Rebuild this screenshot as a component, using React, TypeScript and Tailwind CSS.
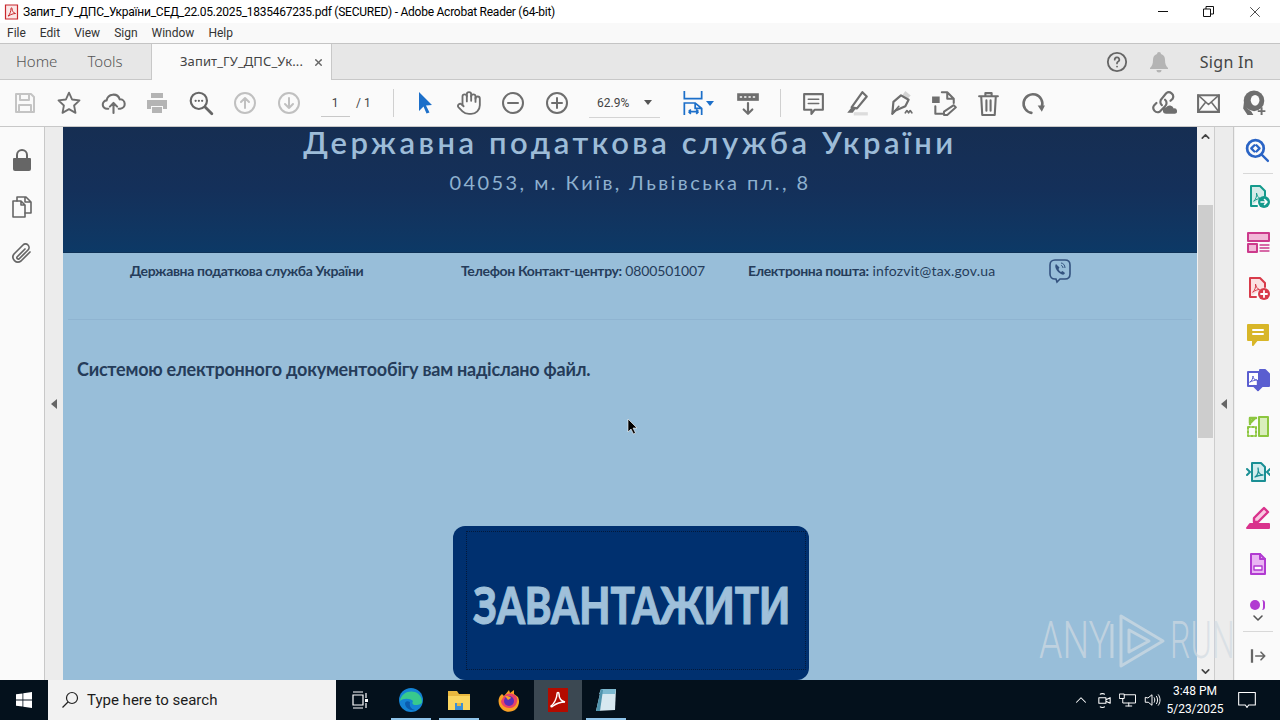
import { ChevronDown, ChevronUp, Hand, X } from "lucide-react";
import type { ReactNode } from "react";

const ui = "font-['Roboto',sans-serif]";
const adobe = "font-['Noto_Sans',sans-serif]";
const doc = "font-['Lato','Noto_Sans',sans-serif]";

function Ico({ size = 24, className = "", children }: { size?: number; className?: string; children: ReactNode }) {
  return (
    <svg
      width={size}
      height={size}
      viewBox="0 0 24 24"
      fill="none"
      stroke="currentColor"
      strokeWidth="2"
      strokeLinecap="round"
      strokeLinejoin="round"
      className={className}
    >
      {children}
    </svg>
  );
}

function Slot({ children, className = "w-11" }: { children: ReactNode; className?: string }) {
  return <div className={`flex h-full shrink-0 items-center justify-center ${className}`}>{children}</div>;
}

function Toolbar() {
  return (
    <div className="flex h-[47px] shrink-0 items-center border-b border-[#c8c8c8] bg-[#fafafa] pl-[3px] text-[#6e6e6e]">
      <Slot>
        <Ico className="text-[#c4c4c4]">
          <path d="M3 3h15l3 3v15H3z" />
          <path d="M7 3v6h9V3M6 21v-7h12v7" />
        </Ico>
      </Slot>
      <Slot>
        <Ico size={26}>
          <path strokeWidth="1.7" d="M12 2.500l2.900 6.300 6.800.8-5 4.700 1.300 6.800-6-3.400-6 3.400 1.300-6.800-5-4.700 6.800-.8z" />
        </Ico>
      </Slot>
      <Slot>
        <Ico size={25}>
          <path d="M7 17H6a4 4 0 0 1-.6-8A6.500 6.500 0 0 1 18 8a4.500 4.500 0 0 1 .5 9H17" />
          <path d="M12 21v-9M8.500 15l3.500-3.500 3.500 3.500" />
        </Ico>
      </Slot>
      <Slot>
        <svg width="24" height="24" viewBox="0 0 24 24" className="text-[#b4b4b4]" fill="currentColor">
          <path d="M6 2h12v5H6zM2 9h20v9h-4v-3H6v3H2z" />
          <path d="M7 16h10v6H7z" />
        </svg>
      </Slot>
      <Slot>
        <Ico size={26} className="text-[#666]">
          <circle cx="10" cy="10" r="7.500" />
          <path d="M16 16l6 6" strokeWidth="2.600" />
          <path d="M7 10h.1M10 10h.1M13 10h.1" />
        </Ico>
      </Slot>
      <Slot>
        <Ico className="text-[#c0c0c0]">
          <circle cx="12" cy="12" r="10" />
          <path d="M12 17V7M8 11l4-4 4 4" />
        </Ico>
      </Slot>
      <Slot>
        <Ico className="text-[#c0c0c0]">
          <circle cx="12" cy="12" r="10" />
          <path d="M12 7v10M8 13l4 4 4-4" />
        </Ico>
      </Slot>
      <Slot className="w-[48px]">
        <span className={`${ui} flex h-[27px] w-[29px] items-center justify-center border-b border-[#c8c8c8] text-xs text-[#444]`}>1</span>
      </Slot>
      <span className={`${ui} ml-[-3px] w-[18px] text-xs text-[#444]`}>/ 1</span>
      <div className="ml-[19px] h-[28px] w-px bg-[#d0d0d0]" />
      <Slot className="ml-[9px] w-[44px]">
        <svg width="24" height="24" viewBox="0 0 24 24" fill="#1c6fc9">
          <path d="M6 1l13 13-6 .5 3.500 7-3 1-3-7L6 20z" />
        </svg>
      </Slot>
      <Slot>
        <Hand size={26} strokeWidth={1.7} />
      </Slot>
      <Slot>
        <Ico>
          <circle cx="12" cy="12" r="10" />
          <path d="M7 12h10" />
        </Ico>
      </Slot>
      <Slot>
        <Ico>
          <circle cx="12" cy="12" r="10" />
          <path d="M7 12h10M12 7v10" />
        </Ico>
      </Slot>
      <div className={`${ui} ml-[10px] flex h-[29px] w-[71px] items-center justify-between border-b border-[#d4d4d4] pl-[8px] pr-[8px] text-xs text-[#444]`}>
        <span>62.9%</span>
        <span className="h-0 w-0 border-x-[4px] border-t-[5px] border-x-transparent border-t-[#555]" />
      </div>
      <div className="ml-[20px] flex w-[34px] items-center">
        <Ico size={26} className="text-[#1c6fc9]">
          <path d="M4 1v7h16V1M4 23V12h10l6 5v6M14 12v5h6M8 20h9M8 20l2-2M8 20l2 2M17 20l-2-2M17 20l-2 2" strokeWidth="1.600" strokeLinecap="butt" strokeLinejoin="miter" />
        </Ico>
        <span className="h-0 w-0 border-x-[4px] border-t-[5px] border-x-transparent border-t-[#1c6fc9]" />
      </div>
      <Slot className="ml-[12px] w-[44px]">
        <Ico size={26}>
          <path d="M2 3h20v7H2z" fill="#6e6e6e" stroke="none" />
          <path d="M5 6.500h1M9 6.500h1M13 6.500h1M17 6.500h1" stroke="#fff" strokeWidth="1.500" />
          <path d="M12 12v10M8 18l4 4 4-4" />
        </Ico>
      </Slot>
      <div className="ml-[10px] h-[28px] w-px bg-[#d0d0d0]" />
      <Slot className="ml-[10px] w-[44px]">
        <Ico size={25}>
          <path d="M3 3h18v15H13l-3 4v-4H3z" />
          <path d="M7 8h10M7 12h10" strokeWidth="1.500" />
        </Ico>
      </Slot>
      <Slot>
        <Ico size={26}>
          <path d="M17 2l4 4-9 11-5-1z" fill="#fafafa" />
          <path d="M7 16l-4 5h5l3-4" fill="#6e6e6e" stroke="none" />
          <path d="M9 22h13" stroke="#dcdcdc" strokeWidth="3" strokeLinecap="butt" />
        </Ico>
      </Slot>
      <Slot className="w-[43px]">
        <Ico size={26}>
          <path d="M16 1l5 4-3 3-5-3z" fill="#d4d4d4" stroke="none" />
          <path d="M12 5l7 4-3 6-9 4-3 3 1-11z" strokeWidth="2" />
          <path d="M4 22l6-7" strokeWidth="1.500" />
          <path d="M16 21l1.500-2 1.500 2 1.500-2 1.500 2" strokeWidth="1.600" />
        </Ico>
      </Slot>
      <Slot>
        <Ico size={26}>
          <path d="M10 2h5l6 6v4M15 2v6h6" strokeWidth="1.900" />
          <path d="M1 6h7v6H1z" fill="#6e6e6e" stroke="none" />
          <path d="M4 15v7h7" strokeWidth="1.900" />
          <path d="M21 14l2 2-8 7h-3v-3z" strokeWidth="1.800" />
        </Ico>
      </Slot>
      <Slot className="w-[45px]">
        <Ico size={25}>
          <path d="M3 5h18M9 5V2h6v3M5 5l1 18h12l1-18M10 9v10M14 9v10" />
        </Ico>
      </Slot>
      <Slot>
        <Ico size={25}>
          <path strokeWidth="2.500" d="M10 21a9 9 0 1 1 10-6" />
          <path d="M16 14h7l-3 6z" fill="#6e6e6e" stroke="none" />
        </Ico>
      </Slot>
      <div className="ml-auto flex h-full pr-[4px]">
        <Slot className="w-[45px]">
          <Ico size={26}>
            <path d="M10 14a4 4 0 0 1 0-6l4-5a4 4 0 0 1 6 5l-2 2M13 9a4 4 0 0 1 0 6l-5 5a4 4 0 0 1-5-6l2-2" />
            <path d="M14 22a3 3 0 0 1 0-6 4 4 0 0 1 7 1 2.500 2.500 0 0 1 1 5z" fill="#6e6e6e" stroke="none" />
          </Ico>
        </Slot>
        <Slot className="w-[45px]">
          <Ico size={25}>
            <path d="M2 4h20v16H2z" strokeLinejoin="miter" />
            <path d="M2 4l10 9 10-9M2 20l7-9M22 20l-7-9" strokeWidth="1.500" />
          </Ico>
        </Slot>
        <Slot className="w-[45px]">
          <svg width="26" height="26" viewBox="0 0 24 24">
            <circle cx="12" cy="10" r="9.500" fill="#6e6e6e" />
            <path d="M3 9c1 6 3 9 7 11l2 3H6l-4-6z" fill="#6e6e6e" />
            <ellipse cx="13" cy="9.500" rx="4" ry="5" fill="#fafafa" />
            <path d="M9 19c2 2 7 2 8-1l6 1v5H12z" fill="#fafafa" />
            <path d="M19 16v7M15.500 19.500h7" stroke="#6e6e6e" strokeWidth="1.800" />
          </svg>
        </Slot>
      </div>
    </div>
  );
}

const rightTools: ReactNode[] = [
  <g className="text-[#149a8c]">
    <path d="M5 22V2h9l5 5v5M11 22H5" stroke="currentColor" fill="#d4ebe8" />
    <path d="M8 17c2-2 3-5 2.500-8 .5 3 2 5 4 5.500-2 0-4.500 1-6.500 2.500z" stroke="currentColor" strokeWidth="1" />
    <circle cx="18" cy="18" r="6" fill="currentColor" stroke="none" />
    <path d="M15 18h6M18.500 15.500L21 18l-2.500 2.500" stroke="#fff" strokeWidth="1.600" />
  </g>,
  <g className="text-[#cc3a8c]">
    <path d="M2 3h21v8H2z" fill="#f2b8d8" stroke="currentColor" />
    <path d="M2 14h9v8H2z" fill="#f2b8d8" stroke="currentColor" />
    <path d="M14 15h9M14 18h9M14 21h9" stroke="currentColor" strokeWidth="1.300" />
  </g>,
  <g className="text-[#d83b4a]">
    <path d="M4 21V2h10l5 5v4M4 21h6" stroke="currentColor" fill="#fbe0e2" />
    <path d="M7 16c2-2 3-5 2.500-8 .5 3 2 5 4 5.500-2 0-4.500 1-6.500 2.500z" stroke="currentColor" strokeWidth="1" />
    <circle cx="18" cy="18" r="6" fill="currentColor" stroke="none" />
    <path d="M15 18h6M18 15v6" stroke="#fff" strokeWidth="1.800" />
  </g>,
  <g>
    <path d="M2 3h20v15H11l-4 5v-5H2z" fill="#d8b628" stroke="#d8b628" />
    <path d="M7 8h10M7 12h10" stroke="#fff" />
  </g>,
  <g>
    <path d="M2 4h11v14H2z" fill="#fff" stroke="#5a5ed0" />
    <path d="M4 14c2-1 3-4 3-6 0 2 1 4 4 4-2 0-5 1-7 2z" stroke="#5a5ed0" strokeWidth="1" />
    <path d="M14 2h5l4 4v12H14z" fill="#5a5ed0" stroke="#5a5ed0" />
    <path d="M12 13v9M8 18l4 4 4-4" stroke="#5a5ed0" strokeWidth="2.400" />
  </g>,
  <g stroke="#8cc63f">
    <path d="M13 3h9v19h-9z" fill="#d9eebc" />
    <path d="M2 13h8v9H2z" strokeDasharray="2 2" />
    <path d="M10 4H4v6M9 4L4 9" strokeWidth="2.500" />
  </g>,
  <g stroke="#1a8f94">
    <path d="M6 3h9l4 4v14H6z" fill="#d2eced" />
    <path d="M1 9l3 3-3 3M24 9l-3 3 3 3" />
    <path d="M9 17c3-2 4-6 3-9 0 4 2 7 5 7-3 0-6 1-8 2z" strokeWidth="1.300" />
  </g>,
  <g>
    <path d="M18 2l4 4-10 10H8v-4z" fill="#f9c9e2" stroke="#d9328c" strokeWidth="2.400" />
    <path d="M1 22l3-4h19v4z" fill="#d9328c" stroke="#d9328c" />
  </g>,
  <g>
    <path d="M5 2h9l5 5v15H5z" fill="#eab5f4" stroke="#b13bd1" />
    <path d="M14 2v5h5" stroke="#b13bd1" />
    <path d="M8 14h8v4H8z" fill="#fff" stroke="#b13bd1" strokeWidth="1.400" />
  </g>,
];

function RightPanel() {
  return (
    <aside className="flex w-[46px] shrink-0 flex-col items-center overflow-hidden border-l border-[#f0f0f0] bg-[#fafafa]">
      <div className="flex h-[46px] shrink-0 items-center justify-center">
        <Ico size={25} className="text-[#2a64c5]">
          <circle cx="10" cy="10" r="8" strokeWidth="2.600" />
          <path d="M16 16l6 6M9 7l-3 3 3 3M11 7l3 3-3 3" strokeWidth="2.200" />
        </Ico>
      </div>
      <div className="h-px w-[30px] shrink-0 bg-[#d8d8d8]" />
      <div className="flex flex-col gap-[22px] pt-[10px]">
        {rightTools.map((node, i) => (
          <Ico key={i} size={24}>
            {node}
          </Ico>
        ))}
      </div>
      <div className="mt-[24px] flex h-[10px] shrink-0 items-start gap-[2px] overflow-hidden">
        <span className="h-[10px] w-[10px] rounded-full bg-[#b13bd1]" />
        <span className="h-[10px] w-[3px] rounded-r-full border-r-2 border-[#b13bd1]" />
      </div>
      <ChevronDown size={16} strokeWidth={2.4} className="shrink-0 text-[#555]" />
      <div className="mt-[5px] h-px w-[30px] shrink-0 bg-[#d8d8d8]" />
      <div className="flex flex-1 items-center">
        <Ico size={18} className="text-[#666]">
          <path d="M4 3v18" strokeWidth="3" strokeLinecap="butt" />
          <path d="M9 12h12M16 7l5 5-5 5" strokeWidth="2.200" />
        </Ico>
      </div>
    </aside>
  );
}

function Page() {
  return (
    <div className={`${doc} w-[1134px] shrink-0 bg-[#98bed9]`}>
      <div className="flex h-[126px] flex-col items-center border-b border-[#0e3257] bg-gradient-to-b from-[#162e52] via-[#14305a] to-[#0c3966]">
        <div className="mt-[-1px] text-[31px] font-semibold leading-[32px] tracking-[3.52px] text-[#9dbcd8]">Державна податкова служба України</div>
        <div className="mt-[10px] text-[20px] leading-[28px] tracking-[2.45px] text-[#8eb1cf]">04053, м. Київ, Львівська пл., 8</div>
      </div>
      <div className="h-[66px] pl-[67px] pt-[5px] text-[#253c5a]">
        <div className="grid grid-cols-[331px_287px_301px_24px] items-center text-sm leading-5">
          <span className="font-bold tracking-[-0.35px]">Державна податкова служба України</span>
          <span className="tracking-[-0.15px]">
            <b className="tracking-[-0.35px]">Телефон Контакт-центру:</b> 0800501007
          </span>
          <span className="tracking-[0.2px]">
            <b className="tracking-[-0.35px]">Електронна пошта:</b> infozvit@tax.gov.ua
          </span>
          <svg width="22" height="26" viewBox="0 0 22 26" fill="none" stroke="#33527f" strokeWidth="1.600">
            <path d="M7 21H6c-3 0-5-2-5-5V7c0-3 2-5 5-5h10c3 0 5 2 5 5v9c0 3-2 5-5 5h-5l-3 3z" />
            <path d="M7 6c-1 1-1 3 0 5s3 4 5 5 3 1 4-1l-2.500-2-1.500 1c-1-.5-2-1.500-2.500-3l1-1.500z" fill="#33527f" stroke="none" />
            <path d="M12 5c2 0 4 2 4 5M12 7.500c1 0 2 1 2 2.500" strokeWidth="1" />
          </svg>
        </div>
      </div>
      <div className="mx-[5px] h-px bg-[#8fb4d1]" />
      <h2 className="pl-[14px] pt-[37px] text-lg font-bold leading-[24px] tracking-[-0.23px] text-[#253c5a]">
        Системою електронного документообігу вам надіслано файл.
      </h2>
      <div className="ml-[390px] mt-[145px] h-[154px] w-[356px] rounded-[12px] bg-[#00306f] pl-[13px] pr-[3px] pt-[5px]">
        <div className="flex h-[139px] items-center justify-center border border-dotted border-[#04193a] pr-[8px] pt-[7px] text-[51px] font-black leading-none text-[#9fc0da]">
          <span className="mx-[-50px] inline-block scale-x-[0.79] whitespace-nowrap [-webkit-text-stroke:1px_#9fc0da]">ЗАВАНТАЖИТИ</span>
        </div>
      </div>
    </div>
  );
}

function TaskIcon({ children, lined, className = "" }: { children: ReactNode; lined?: boolean; className?: string }) {
  return (
    <div className={`relative flex items-center justify-center ${className}`}>
      {children}
      {lined && <span className="absolute inset-x-[4px] bottom-0 h-[2px] bg-[#8fc4ea]" />}
    </div>
  );
}

function Taskbar() {
  return (
    <div className="flex h-10 shrink-0 items-stretch bg-[#04111c] text-white">
      <div className="flex w-12 items-center justify-center">
        <svg width="16" height="16" viewBox="0 0 16 16" fill="#fff">
          <path d="M0 2.300l6.500-.9v6.200H0zM7.300 1.300L16 0v7.600H7.300zM0 8.400h6.500v6.200L0 13.700zM7.300 8.400H16V16l-8.700-1.300z" />
        </svg>
      </div>
      <div className={`${ui} flex w-[288px] items-center bg-[#f2f2f2] pl-[13px] text-[#1c1c1c]`}>
        <svg width="18" height="18" viewBox="0 0 18 18" fill="none" stroke="#222" strokeWidth="1.200">
          <circle cx="11" cy="7" r="5.500" />
          <path d="M7 11l-5.500 5.500" />
        </svg>
        <span className="ml-[8px] text-[15px]">Type here to search</span>
      </div>
      <div className="flex w-12 items-center justify-center">
        <svg width="16" height="18" viewBox="0 0 16 18" fill="none" stroke="#fff" strokeWidth="1.200">
          <path d="M1 4h10v10H1zM1 1h10M1 17h10M14 2v5M14 12v5" />
          <path d="M13 8h3v3h-3z" fill="#fff" stroke="none" />
        </svg>
      </div>
      <TaskIcon lined className="ml-[3px] w-[48px]">
        <svg width="26" height="26" viewBox="0 0 26 26">
          <circle cx="13" cy="13" r="12" fill="#1483d4" />
          <path d="M2 14C3 6 11 3 17 5c5 2 7 6 7 10 0 2-3 3-6 3-4 0-4-2-3-4-3-3-10-3-13 0z" fill="#38c98d" />
          <path d="M7 16c0 5 5 8 10 7-4-1-6-4-5-8-2-1-4-1-5 1z" fill="#0b5cae" />
        </svg>
      </TaskIcon>
      <TaskIcon lined className="w-[48px]">
        <svg width="24" height="24" viewBox="0 0 24 24">
          <path d="M1 3h9l2 3h11v3H1z" fill="#e9b83f" />
          <path d="M1 8h22v14H1z" fill="#fbd661" />
          <path d="M8 15h8v7H8z" fill="#3e8fd6" />
          <path d="M10 15h4v3h-4z" fill="#e9b83f" />
        </svg>
      </TaskIcon>
      <TaskIcon className="w-[51px]">
        <svg width="26" height="26" viewBox="0 0 26 26">
          <path d="M4 9l2-2 2 2 5-6 1 3 4-3v4l4 3c2 4 1 9-2 12s-9 4-13 1-6-9-3-14z" fill="#f9a125" />
          <path d="M8 9c4-4 11-3 13 2 1 5-2 10-8 10-4 0-8-3-8-7z" fill="#e8416a" />
          <circle cx="13" cy="14" r="5" fill="#5a2fb8" />
          <path d="M9 9c2 0 5 0 6 2l-3 2z" fill="#f9a125" />
        </svg>
      </TaskIcon>
      <TaskIcon className="w-[48px] bg-[#3b4852]">
        <svg width="24" height="24" viewBox="0 0 24 24">
          <path d="M2 0h20v24H2z" fill="#b30b00" />
          <path d="M5 18c3-2 6-8 6-12 0-2 2-2 2 0 0 4 2 7 6 8-3 0-8 1-12 4-1 1-2 1-2 0z" fill="none" stroke="#fff" strokeWidth="1.500" />
        </svg>
      </TaskIcon>
      <TaskIcon lined className="w-[48px]">
        <svg width="26" height="26" viewBox="0 0 26 26">
          <path d="M8 2h15l-1 21-19 1z" fill="#d7e8f0" />
          <path d="M8 2h15l-1 5H6z" fill="#7db9d0" />
          <path d="M3 24L8 2l2 1-3 21z" fill="#4f93ac" />
        </svg>
      </TaskIcon>
      <div className="ml-auto flex items-center pr-[23px]">
        <ChevronUp size={18} strokeWidth={1.4} />
        <Ico size={17} className="ml-[6px]">
          <path d="M4 8h10v8H4zM14 11l6-3v8l-6-3M6 3c1-1 5-1 6 0M6 21c1 1 5 1 6 0" strokeWidth="1.500" />
        </Ico>
        <Ico size={18} className="ml-[6px]">
          <path d="M1 4h6v6H1zM7 5h15v11H5v-6M13 16v4M9 20h8" strokeWidth="1.300" />
        </Ico>
        <Ico size={18} className="ml-[6px]">
          <path d="M3 9v6h4l5 4V5L7 9zM15 9c1 2 1 4 0 6M18 7c2 3 2 7 0 10M20.500 5c3 4 3 10 0 14" strokeWidth="1.300" />
        </Ico>
        <div className={`${ui} ml-[4px] w-[60px] text-center text-xs leading-[18px]`}>
          <div>3:48 PM</div>
          <div>5/23/2025</div>
        </div>
        <Ico size={20} className="ml-[12px]">
          <path d="M2 3h20v15h-8l-2 3-2-3H2z" strokeWidth="1.300" />
        </Ico>
      </div>
    </div>
  );
}

function Watermark() {
  return (
    <div className="pointer-events-none absolute left-[1039px] top-[610px] flex h-[62px] items-center font-['Roboto',sans-serif] text-[52px] font-light leading-none text-[#d2dbe2]/70">
      <span className="w-[68px] origin-left scale-x-[0.72]">ANY</span>
      <svg width="60" height="62" viewBox="0 0 60 62" fill="none" stroke="currentColor" strokeWidth="3" strokeLinejoin="round">
        <path d="M5 14v34M14 6v50l42-25zM22 20v22l20-11z" />
      </svg>
      <span className="ml-[3px] w-[66px] origin-left scale-x-[0.62]">RUN</span>
    </div>
  );
}

export default function App() {
  return (
    <div className={`${ui} relative flex h-[720px] w-[1280px] flex-col overflow-hidden bg-white`}>
      <div className="flex h-[23px] shrink-0 items-center bg-white pl-[4px] text-xs text-black">
        <svg width="15" height="16" viewBox="0 0 15 16" fill="none" stroke="#c8272c" strokeWidth="1.200">
          <path d="M1.500 1h12v14h-12z" fill="#fbe7e7" />
          <path d="M4 12c2-1.500 3-5 3-7.500 0-1 1-1 1 0 0 2.500 1.500 4.500 3.500 5-2 0-5 1-7 2.500z" strokeWidth="1" />
        </svg>
        <span className="ml-[4px] tracking-[-0.25px]">Запит_ГУ_ДПС_України_СЕД_22.05.2025_1835467235.pdf (SECURED) - Adobe Acrobat Reader (64-bit)</span>
        <div className="ml-auto flex h-full items-center">
          <span className="h-px w-[10px] bg-[#111]" />
          <svg width="11" height="11" viewBox="0 0 11 11" fill="none" stroke="#111" className="ml-[35px]">
            <path d="M.5 3h7v7.500h-7zM3 3V.5h7.500V8H8" />
          </svg>
          <X size={18} strokeWidth={1} className="ml-[32px] mr-[16px] text-[#111]" />
        </div>
      </div>
      <div className="flex h-[21px] shrink-0 items-center gap-[14px] border-b border-[#c4c4c4] bg-[#f9f9f9] pl-[7px] text-xs text-[#333]">
        <span>File</span>
        <span>Edit</span>
        <span>View</span>
        <span>Sign</span>
        <span>Window</span>
        <span>Help</span>
      </div>
      <div className={`${adobe} flex h-[36px] shrink-0 items-stretch border-b border-[#c8c8c8] bg-[#e7e7e7] text-[15px] font-light text-[#555]`}>
        <div className="flex w-[151px] items-center gap-[30px] pl-[16px]">
          <span>Home</span>
          <span>Tools</span>
        </div>
        <div className="mb-[-1px] flex w-[181px] items-center border-x border-[#c8c8c8] bg-[#fafafa] pl-[28px] text-[13px] font-normal text-[#444]">
          <span className="tracking-[0.1px]">Запит_ГУ_ДПС_Ук...</span>
          <X size={11} strokeWidth={3} className="ml-[10px] text-[#666]" />
        </div>
        <div className="ml-auto flex items-center pr-[26px]">
          <Ico size={22} className="text-[#666]">
            <circle cx="12" cy="12" r="10" />
            <path d="M9.500 9.500a2.500 2.500 0 1 1 3.500 2.300c-.7.400-1 .9-1 1.700M12 17h.1" strokeWidth="1.900" />
          </Ico>
          <svg width="20" height="22" viewBox="0 0 20 22" fill="#b4b4b4" className="ml-[21px]">
            <path d="M10 1a2 2 0 0 1 2 2c3 1 4 3 4 6 0 4 1 6 3 8v1H1v-1c2-2 3-4 3-8 0-3 1-5 4-6a2 2 0 0 1 2-2zM7.500 19h5a2.500 2.500 0 0 1-5 0z" />
          </svg>
          <span className="ml-[31px] text-[16px] font-normal tracking-[0.3px] text-[#444]">Sign In</span>
        </div>
      </div>
      <Toolbar />
      <div className="flex min-h-0 flex-1">
        <aside className="flex w-[45px] shrink-0 flex-col items-center gap-[23px] border-r border-[#c8c8c8] bg-[#fafafa] pt-[21px] text-[#666]">
          <svg width="18" height="24" viewBox="0 0 18 24" fill="#666">
            <path d="M1 10h16a1 1 0 0 1 1 1v10a2 2 0 0 1-2 2H2a2 2 0 0 1-2-2V11a1 1 0 0 1 1-1z" />
            <path d="M4 10V7a5 5 0 0 1 10 0v3" fill="none" stroke="#666" strokeWidth="2" />
          </svg>
          <Ico size={24}>
            <path d="M7 6V2h9l5 5v11h-6M15 2v5h6" strokeWidth="1.600" />
            <path d="M3 6h8l4 4v12H3zM11 6v4h4" strokeWidth="1.600" />
          </Ico>
          <Ico size={24} className="mt-[-1px]">
            <path d="M20 11l-9 9a5 5 0 0 1-7-7l9-9a3.500 3.500 0 0 1 5 5l-9 9a1.500 1.500 0 0 1-2-2l8-8" strokeWidth="1.700" />
          </Ico>
        </aside>
        <div className="flex w-[18px] shrink-0 items-center justify-center bg-[#ececec]">
          <span className="h-0 w-0 border-y-[5px] border-r-[6px] border-y-transparent border-r-[#666]" />
        </div>
        <Page />
        <div className="flex w-[18px] shrink-0 flex-col items-center border-r border-[#cdcdcd] bg-[#f1f1f1]">
          <div className="flex h-[18px] shrink-0 items-center justify-center">
            <ChevronUp size={13} strokeWidth={3} className="text-[#444]" />
          </div>
          <div className="mt-[60px] h-[233px] w-[15px] shrink-0 bg-[#cdcdcd]" />
          <div className="mt-auto flex h-[18px] shrink-0 items-center justify-center">
            <ChevronDown size={13} strokeWidth={3} className="text-[#444]" />
          </div>
        </div>
        <div className="flex w-[19px] shrink-0 items-center justify-center border-r border-[#c8c8c8] bg-[#ececec]">
          <span className="h-0 w-0 border-y-[5px] border-r-[6px] border-y-transparent border-r-[#666]" />
        </div>
        <RightPanel />
      </div>
      <Taskbar />
      <Watermark />
      <svg width="12" height="17" viewBox="0 0 12 17" className="absolute left-[627px] top-[418px]">
        <path d="M1 1v13l3-3 2.500 5 2-1-2.500-5h4z" fill="#000" stroke="#fff" strokeWidth="0.600" />
      </svg>
    </div>
  );
}
